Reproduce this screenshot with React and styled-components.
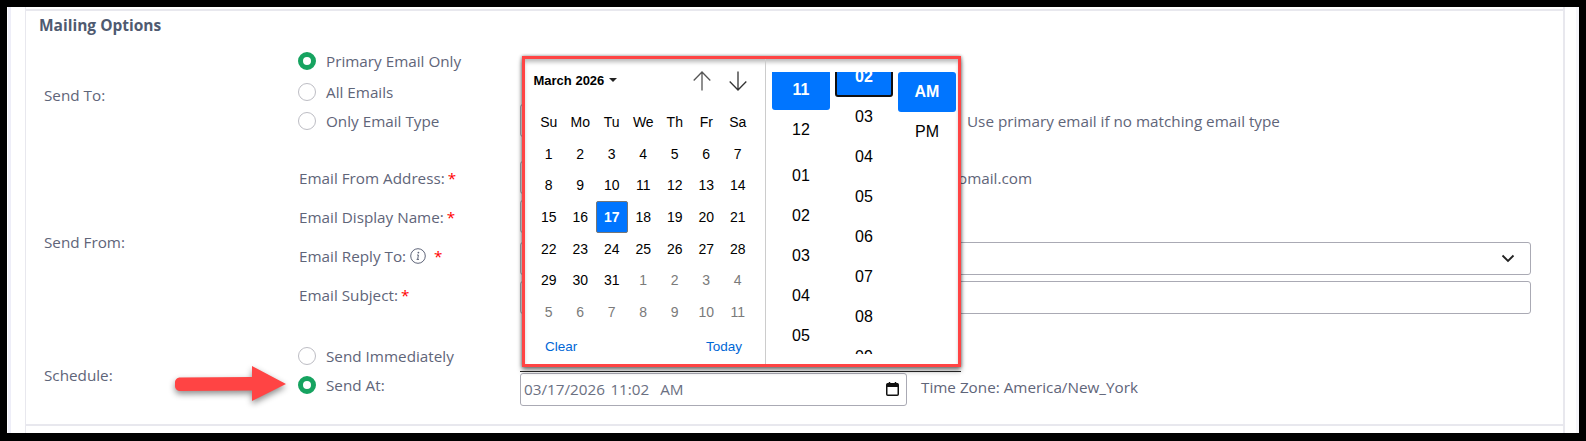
import React from "react";
import styled, { createGlobalStyle } from "styled-components";

const Global = createGlobalStyle`
  html, body { margin: 0; padding: 0; background: #000; }
  * { box-sizing: border-box; }
`;

const Frame = styled.div`
  width: 1586px;
  height: 441px;
  background: #fff;
  border-style: solid;
  border-color: #000;
  border-width: 7px 7px 8px 7px;
  padding: 0 0 0 1px;
  display: flex;
  font-family: "Open Sans", "Noto Sans", sans-serif;
  font-size: 15.25px;
  color: #5f6579;
  overflow: hidden;
`;

const Gutter = styled.div`
  flex: 1;
  border-left: 3px solid #eeeef8;
  border-right: 3px solid #f6f6fa;
  padding: 0 11px 0 14px;
`;

const Card = styled.div`
  position: relative;
  height: 100%;
  border-left: 1px solid #e8e8ee;
  border-right: 2px solid #e8e8ee;
  padding-top: 2px;
`;

const Content = styled.div`
  height: 417px;
  border-top: 2px solid #e8e8ee;
  border-bottom: 2px solid #e8e8ee;
  padding-right: 32px;
`;

const Title = styled.h2`
  margin: 0;
  height: 30px;
  padding-left: 13px;
  font-size: 15.5px;
  font-weight: 700;
  line-height: 28px;
  color: #4f5a70;
`;

const Section = styled.section`
  display: grid;
  grid-template-columns: 254px 1fr;
  padding-left: 18px;
  margin-top: ${(p) => p.$top}px;
`;

const SideLabel = styled.div`
  align-self: center;
  margin-top: ${(p) => p.$shift}px;
`;

const Stack = styled.div`
  display: flex;
  flex-direction: column;
`;

const Row = styled.div`
  display: grid;
  grid-template-columns: 222px 1fr;
  grid-template-rows: ${(p) => p.$h}px;
  align-items: center;
  height: ${(p) => p.$h}px;
`;

const RadioLabel = styled.label`
  display: flex;
  align-items: center;
  gap: 10px;
`;

const RadioDot = styled.span`
  width: 18px;
  height: 18px;
  border-radius: 50%;
  background: #fff;
  border: ${(p) => (p.$on ? "5px solid #16a360" : "1px solid #bdbdc4")};
`;

const FieldLabel = styled.span`
  display: flex;
  align-items: center;
  padding-left: 1px;
`;

const Star = styled.span`
  color: #ff0000;
  margin-left: ${(p) => p.$gap}px;
`;

const Controls = styled.div`
  display: flex;
  align-items: center;
`;

const Input = styled.div`
  height: 33px;
  width: ${(p) => (p.$w ? `${p.$w}px` : "100%")};
  flex: none;
  margin-top: ${(p) => p.$mt || 0}px;
  border: 1px solid #aaaab4;
  border-radius: 3px;
  background: #fff;
  display: flex;
  align-items: center;
  justify-content: ${(p) => (p.$between ? "space-between" : "flex-start")};
  padding: 0 ${(p) => (p.$pr ? p.$pr : 3)}px 0 3px;
`;

const Hint = styled.span`
  margin-left: ${(p) => p.$gap}px;
  margin-top: ${(p) => p.$mt || 0}px;
  white-space: nowrap;
`;

const DateText = styled.span`
  white-space: pre;
  word-spacing: 1.5px;
  color: #6b7082;
`;

const Popup = styled.div`
  position: absolute;
  left: 496px;
  top: 49px;
  width: 439px;
  height: 311px;
  background: #fff;
  border: 3px solid #ff4444;
  box-shadow: 0 4px 5px rgba(0, 0, 0, 0.4), 1px 0 3px rgba(0, 0, 0, 0.25), -1px 0 3px rgba(0, 0, 0, 0.25),
    inset 0 4px 4px -1px rgba(0, 0, 0, 0.28);
  display: flex;
  font-family: "Liberation Sans", Arial, sans-serif;
  color: #000;

  &::after {
    content: "";
    position: absolute;
    left: -5px;
    right: -3px;
    top: 312px;
    height: 1px;
    background: #222;
  }
`;

const Calendar = styled.div`
  width: 241px;
  height: 100%;
  border-right: 1px solid #ccc;
  padding-left: 8px;
`;

const CalHeader = styled.div`
  height: 42px;
  display: flex;
  align-items: center;
`;

const MonthName = styled.span`
  font-size: 13px;
  font-weight: 700;
  padding-left: 0.5px;
`;

const Caret = styled.span`
  margin-left: 5px;
  border-left: 4px solid transparent;
  border-right: 4px solid transparent;
  border-top: 4px solid #222;
`;

const Arrows = styled.div`
  margin-left: auto;
  display: flex;
  gap: 18px;
  margin-right: 18px;
  margin-top: 2px;
`;

const DayGrid = styled.div`
  margin-top: 5.5px;
  display: grid;
  grid-template-columns: repeat(7, 31.5px);
  grid-auto-rows: 31.6px;
  font-size: 14px;
`;

const Day = styled.div`
  display: flex;
  align-items: center;
  justify-content: center;
  border-radius: 2px;
  color: ${(p) => (p.$sel ? "#fff" : p.$out ? "#7a7a7a" : "#000")};
  background: ${(p) => (p.$sel ? "#0075ff" : "transparent")};
  border: ${(p) => (p.$sel ? "1px solid #767676" : "none")};
  font-weight: ${(p) => (p.$sel ? 700 : 400)};
`;

const CalFooter = styled.div`
  height: 37px;
  display: flex;
  justify-content: space-between;
  align-items: center;
  padding: 0 23px 0 12px;
  font-size: 13.5px;
  color: #0067d6;
`;

const Times = styled.div`
  display: flex;
  gap: 5px;
  padding: 13px 0 0 6px;
`;

const TimeCol = styled.div`
  width: 58px;
  height: 282px;
  overflow: hidden;
`;

const TimeList = styled.div`
  margin-top: ${(p) => p.$top}px;
`;

const TimeItem = styled.div`
  height: 40px;
  display: flex;
  align-items: center;
  justify-content: center;
  font-size: 16px;
  border-radius: 3px;
  margin-bottom: ${(p) => p.$after || 0}px;
  color: ${(p) => (p.$sel ? "#fff" : "#000")};
  background: ${(p) => (p.$sel ? "#0075ff" : "transparent")};
  font-weight: ${(p) => (p.$sel ? 700 : 400)};
  border: ${(p) => (p.$focus ? "2px solid #111" : "none")};
`;

const Annotation = styled.svg`
  position: absolute;
  left: 110px;
  top: 345px;
  filter: drop-shadow(0 3px 3px rgba(0, 0, 0, 0.45));
`;

const Radio = ({ on, children }) => (
  <RadioLabel>
    <RadioDot $on={on} />
    {children}
  </RadioLabel>
);

const ArrowIcon = ({ up }) => (
  <svg width="18" height="20" viewBox="0 0 18 20" fill="none" stroke={up ? "#555" : "#333"} strokeWidth="1.3">
    {up ? <path d="M9 19.5V1M0.7 9.5 9 1l8.3 8.5" /> : <path d="M9 .5V19M0.7 10.5 9 19l8.3-8.5" />}
  </svg>
);

const InfoIcon = () => (
  <svg width="16" height="16" viewBox="0 0 16 16" fill="none" stroke="#5f6579" style={{ marginLeft: 4 }}>
    <circle cx="8" cy="8" r="7.3" strokeWidth="1" />
    <path d="M7 7h1.4l-.7 4.2M6.6 11.4h2.4" strokeWidth="1" />
    <circle cx="8.4" cy="4.6" r="0.9" fill="#5f6579" stroke="none" />
  </svg>
);

const Chevron = () => (
  <svg width="14" height="9" viewBox="0 0 14 9" fill="none" stroke="#222" strokeWidth="1.8">
    <path d="M1.5 1.5 7 7l5.5-5.5" />
  </svg>
);

const CalendarIcon = () => (
  <svg width="13" height="14" viewBox="0 0 13 14" fill="none">
    <rect x="0.75" y="1.75" width="11.5" height="11.5" rx="1" stroke="#111" strokeWidth="1.5" />
    <rect x="1" y="1.5" width="11" height="3.5" fill="#111" />
    <path d="M3.5 0v2M9.5 0v2" stroke="#111" strokeWidth="1.5" />
  </svg>
);

const weeks = [
  ["1", "2", "3", "4", "5", "6", "7"],
  ["8", "9", "10", "11", "12", "13", "14"],
  ["15", "16", "17", "18", "19", "20", "21"],
  ["22", "23", "24", "25", "26", "27", "28"],
  ["29", "30", "31", "1", "2", "3", "4"],
  ["5", "6", "7", "8", "9", "10", "11"],
];

export default function App() {
  return (
    <>
      <Global />
      <Frame>
        <Gutter>
          <Card>
            <Content>
              <Title>Mailing Options</Title>
              <Section $top={4}>
                <SideLabel $shift={11}>Send To:</SideLabel>
                <Stack>
                  <Row $h={31}>
                    <Radio on>Primary Email Only</Radio>
                  </Row>
                  <Row $h={31}>
                    <Radio>All Emails</Radio>
                  </Row>
                  <Row $h={27}>
                    <Radio>Only Email Type</Radio>
                    <Controls>
                      <Input $w={440} />
                      <Hint $gap={7}>Use primary email if no matching email type</Hint>
                    </Controls>
                  </Row>
                </Stack>
              </Section>
              <Section $top={24}>
                <SideLabel $shift={12}>Send From:</SideLabel>
                <Stack>
                  <Row $h={39}>
                    <FieldLabel>
                      Email From Address:<Star $gap={3}>*</Star>
                    </FieldLabel>
                    <Controls>
                      <Input $w={436} />
                      <Hint $gap={2}>omail.com</Hint>
                    </Controls>
                  </Row>
                  <Row $h={39}>
                    <FieldLabel>
                      Email Display Name:<Star $gap={3}>*</Star>
                    </FieldLabel>
                    <Controls>
                      <Input $w={436} />
                    </Controls>
                  </Row>
                  <Row $h={39}>
                    <FieldLabel>
                      Email Reply To:
                      <InfoIcon />
                      <Star $gap={8}>*</Star>
                    </FieldLabel>
                    <Input $between $pr={15} $mt={6}>
                      <span />
                      <Chevron />
                    </Input>
                  </Row>
                  <Row $h={39}>
                    <FieldLabel>
                      Email Subject:<Star $gap={3}>*</Star>
                    </FieldLabel>
                    <Input $mt={6} />
                  </Row>
                </Stack>
              </Section>
              <Section $top={27}>
                <SideLabel $shift={11}>Schedule:</SideLabel>
                <Stack>
                  <Row $h={30}>
                    <Radio>Send Immediately</Radio>
                  </Row>
                  <Row $h={27}>
                    <Radio on>Send At:</Radio>
                    <Controls>
                      <Input $w={387} $between $pr={7} $mt={9}>
                        <DateText>03/17/2026 11:02  AM</DateText>
                        <CalendarIcon />
                      </Input>
                      <Hint $gap={14} $mt={5}>Time Zone: America/New_York</Hint>
                    </Controls>
                  </Row>
                </Stack>
              </Section>
            </Content>
            <Annotation width="160" height="60" viewBox="0 0 160 60">
              <path
                d="M39 30.5c0-2.8 2.2-5 5-5l72-.6V14l34 18-34 17v-10.5l-72 .6c-2.8 0-5-2.2-5-5z"
                fill="#ff4444"
              />
            </Annotation>
            <Popup>
              <Calendar>
                <CalHeader>
                  <MonthName>March 2026</MonthName>
                  <Caret />
                  <Arrows>
                    <ArrowIcon up />
                    <ArrowIcon />
                  </Arrows>
                </CalHeader>
                <DayGrid>
                  {["Su", "Mo", "Tu", "We", "Th", "Fr", "Sa"].map((d) => (
                    <Day key={d}>{d}</Day>
                  ))}
                  {weeks.map((w, i) =>
                    w.map((d, j) => (
                      <Day
                        key={`${i}-${j}`}
                        $sel={d === "17"}
                        $out={i === 5 || (i === 4 && j > 2)}
                      >
                        {d}
                      </Day>
                    ))
                  )}
                </DayGrid>
                <CalFooter>
                  <span>Clear</span>
                  <span>Today</span>
                </CalFooter>
              </Calendar>
              <Times>
                <TimeCol>
                  <TimeList $top={-2}>
                    <TimeItem $sel>11</TimeItem>
                    <TimeItem $after={6}>12</TimeItem>
                    {["01", "02", "03", "04", "05"].map((t) => (
                      <TimeItem key={t}>{t}</TimeItem>
                    ))}
                  </TimeList>
                </TimeCol>
                <TimeCol>
                  <TimeList $top={-15}>
                    <TimeItem $sel $focus>02</TimeItem>
                    {["03", "04", "05", "06", "07", "08", "09"].map((t) => (
                      <TimeItem key={t}>{t}</TimeItem>
                    ))}
                  </TimeList>
                </TimeCol>
                <TimeCol>
                  <TimeItem $sel>AM</TimeItem>
                  <TimeItem>PM</TimeItem>
                </TimeCol>
              </Times>
            </Popup>
          </Card>
        </Gutter>
      </Frame>
    </>
  );
}
